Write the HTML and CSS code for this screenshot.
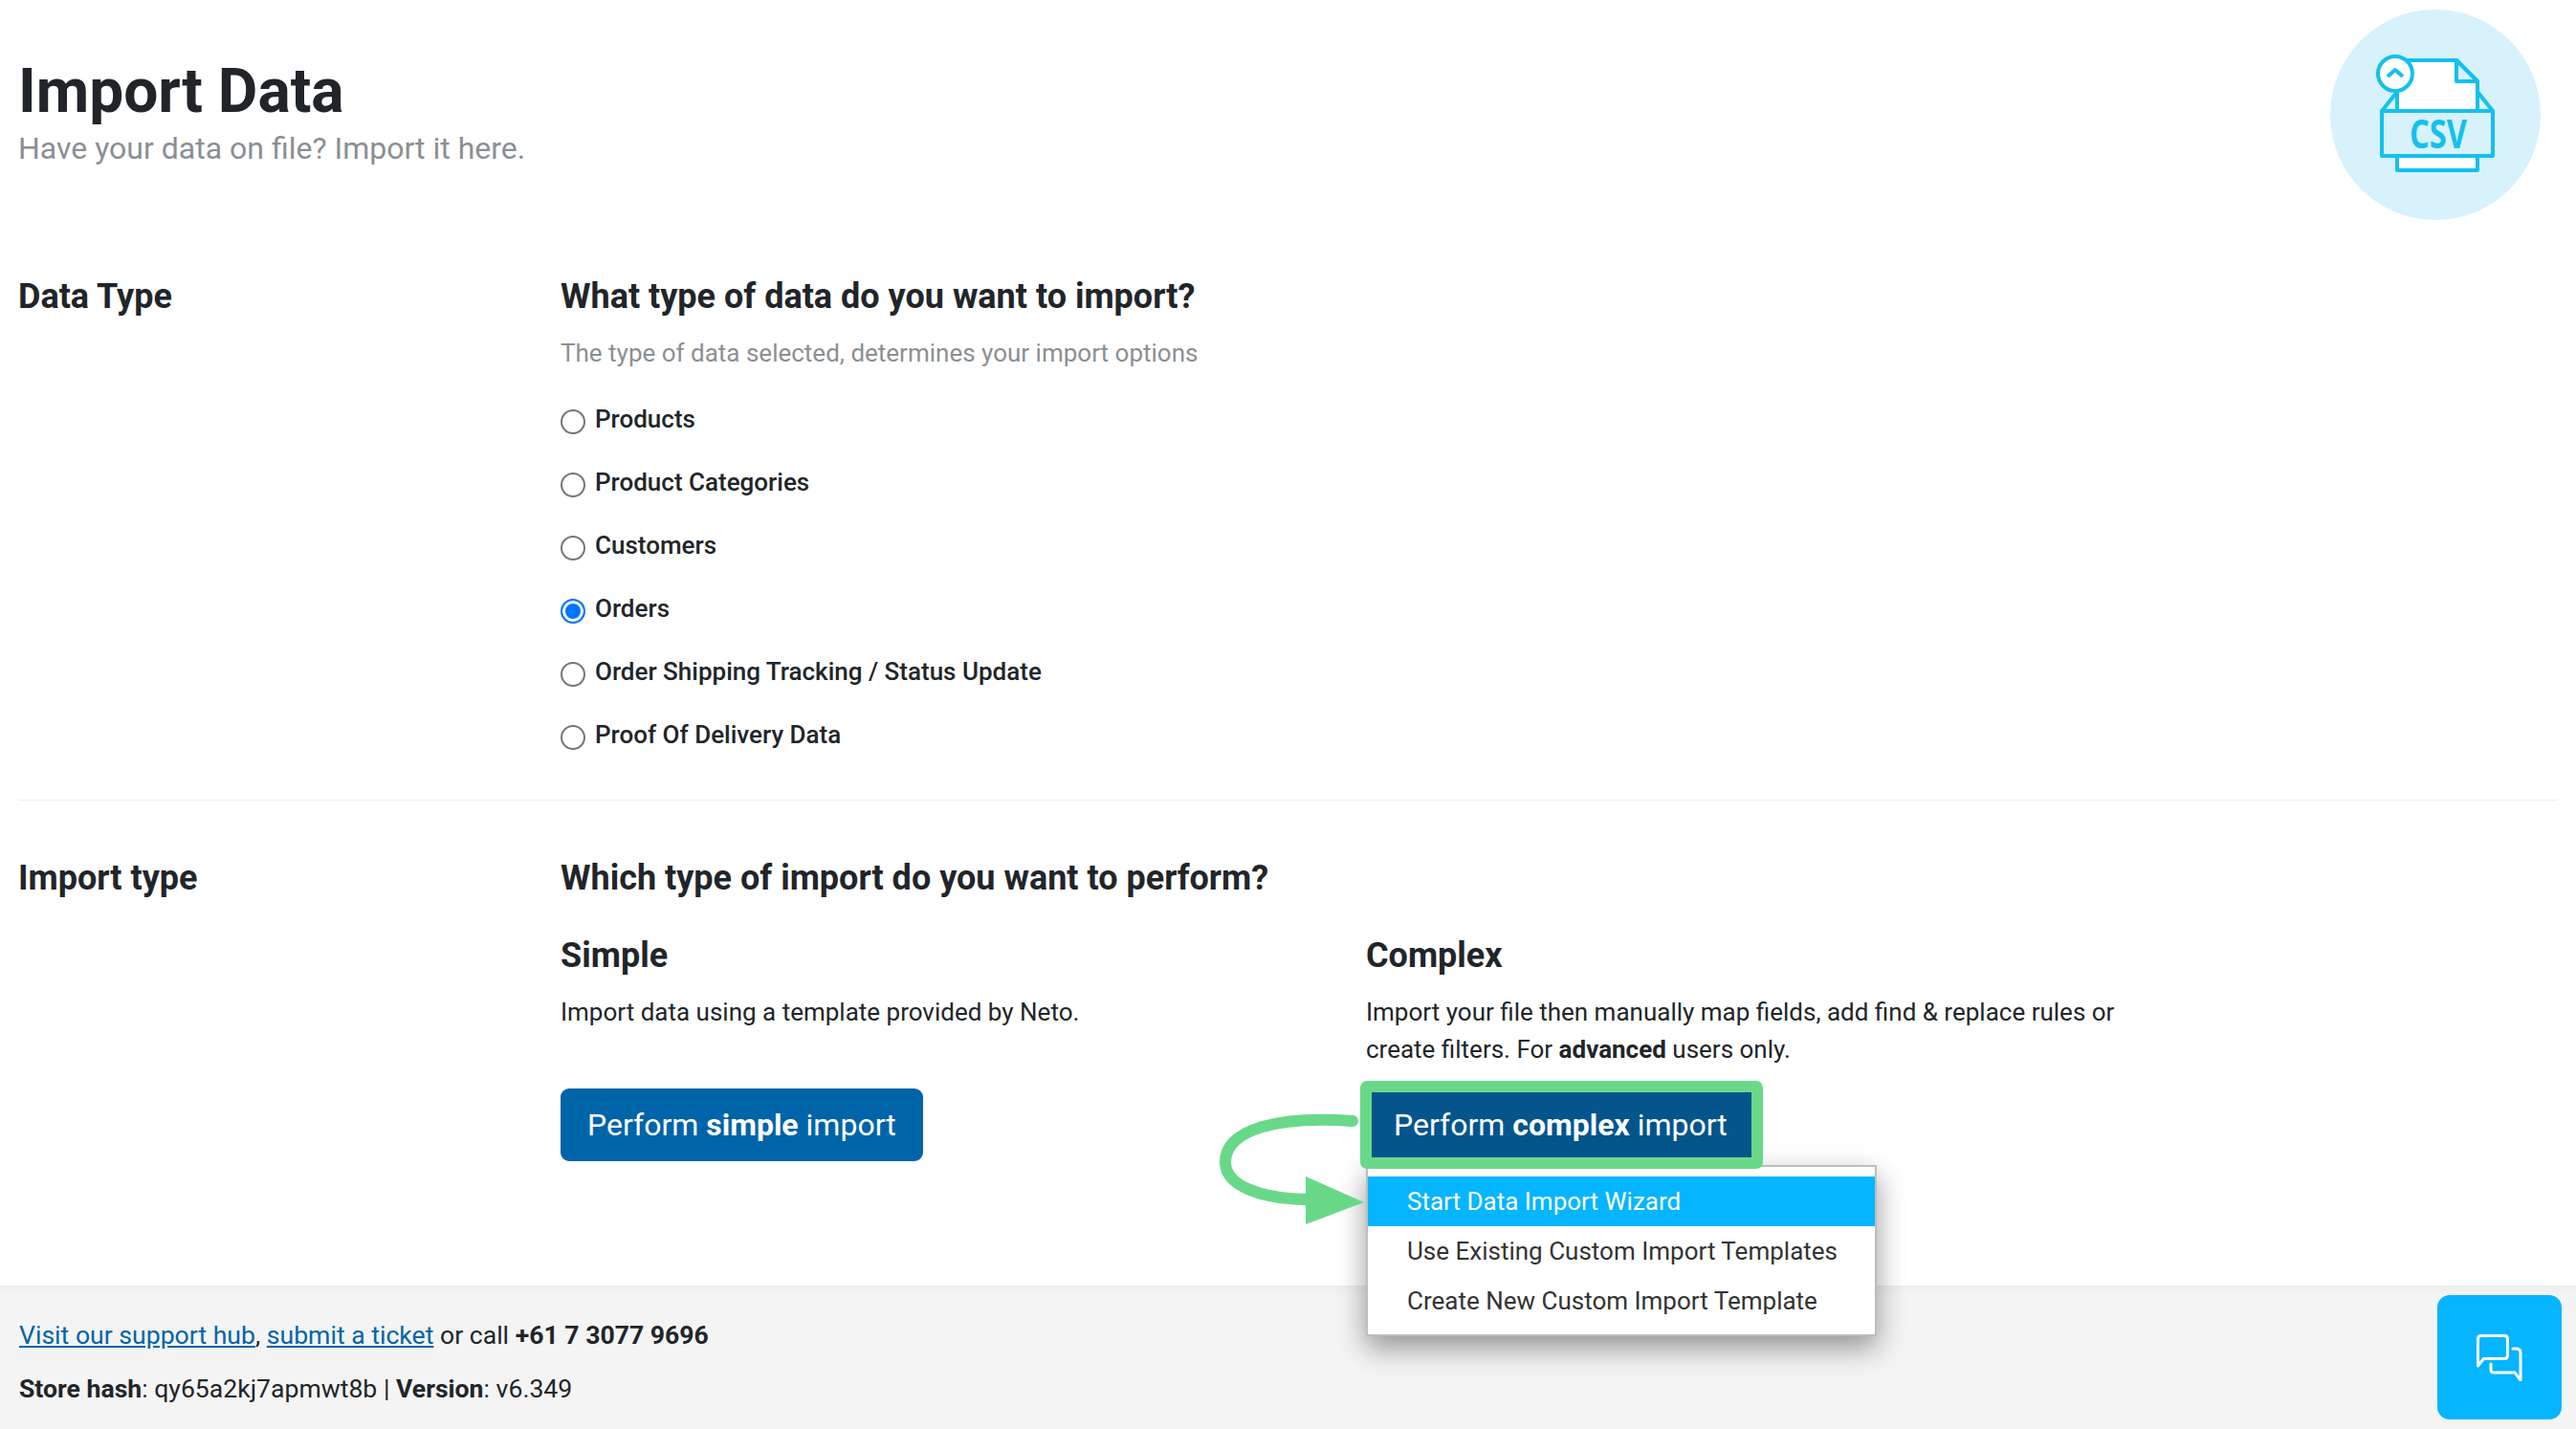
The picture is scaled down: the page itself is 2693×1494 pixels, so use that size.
FILE: index.html
```html
<!DOCTYPE html>
<html lang="en">
<head>
<meta charset="utf-8">
<title>Import Data</title>
<link rel="stylesheet" href="styles.css">
</head>
<body>
<main class="main">
  <header class="page-head">
    <div class="titles">
      <h1 class="title">Import Data</h1>
      <p class="subtitle">Have your data on file? Import it here.</p>
    </div>
    <svg class="csv-badge" width="220" height="220" viewBox="0 0 220 220">
      <circle cx="110" cy="110" r="110" fill="#d8f2fb"/>
      <g fill="#fff" stroke="#14c0ee" stroke-width="4" stroke-linejoin="round">
        <path d="M70 86 L54 106 H170 L154 86 Z" fill="#d8f2fb"/>
        <path d="M70 153 V168 H154 V153 Z"/>
        <path d="M70 106 V53 H132 L154 75 V106 Z"/>
        <path d="M132 53 V75 H154 Z" fill="#d8f2fb"/>
        <rect x="54" y="106" width="116" height="47" fill="#d8f2fb"/>
        <circle cx="68" cy="67" r="18"/>
        <path d="M60 70 L68 63 L76 70" fill="none"/>
      </g>
      <text class="csv-text" x="83" y="145" textLength="60" lengthAdjust="spacingAndGlyphs">CSV</text>
    </svg>
  </header>

  <section class="section">
    <h2 class="section-label">Data Type</h2>
    <div class="section-body">
      <h2 class="question">What type of data do you want to import?</h2>
      <p class="hint">The type of data selected, determines your import options</p>
      <div class="options">
        <label class="option"><input class="radio" type="radio" name="type">Products</label>
        <label class="option"><input class="radio" type="radio" name="type">Product Categories</label>
        <label class="option"><input class="radio" type="radio" name="type">Customers</label>
        <label class="option"><input class="radio" type="radio" name="type" checked>Orders</label>
        <label class="option"><input class="radio" type="radio" name="type">Order Shipping Tracking / Status Update</label>
        <label class="option"><input class="radio" type="radio" name="type">Proof Of Delivery Data</label>
      </div>
    </div>
  </section>

  <hr class="divider">

  <section class="section section-import">
    <h2 class="section-label">Import type</h2>
    <div class="section-body">
      <h2 class="question">Which type of import do you want to perform?</h2>
      <div class="import-cols">
        <div class="import-col">
          <h3 class="col-title">Simple</h3>
          <p class="col-text">Import data using a template provided by Neto.</p>
          <a class="btn btn-simple">Perform <b>simple</b> import</a>
        </div>
        <div class="import-col">
          <h3 class="col-title">Complex</h3>
          <p class="col-text">Import your file then manually map fields, add find &amp; replace rules or create filters. For <b>advanced</b> users only.</p>
          <div class="complex-wrap">
            <div class="highlight"><a class="btn btn-complex">Perform <b>complex</b> import</a></div>
            <svg class="arrow" width="146" height="116" viewBox="0 0 146 116">
              <path d="M133 9 C55 3 0 18 0 52 C0 78 40 90 84 91" fill="none" stroke="#69d989" stroke-width="12" stroke-linecap="round"/>
              <path d="M84 67 L145 94 L84 117 Z" fill="#69d989"/>
            </svg>
            <ul class="menu">
              <li class="menu-item menu-item-active">Start Data Import Wizard</li>
              <li class="menu-item">Use Existing Custom Import Templates</li>
              <li class="menu-item">Create New Custom Import Template</li>
            </ul>
          </div>
        </div>
      </div>
    </div>
  </section>
</main>

<footer class="footer">
  <p class="foot-line"><a class="foot-link">Visit our support hub</a>, <a class="foot-link">submit a ticket</a> or call <b>+61 7 3077 9696</b></p>
  <p class="foot-line foot-line-2"><b>Store hash</b>: qy65a2kj7apmwt8b | <b>Version</b>: v6.349</p>
  <button class="chat" type="button" aria-label="Chat">
    <svg width="48" height="49" viewBox="0 0 48 49" fill="none" stroke="#fff" stroke-width="3" stroke-linejoin="round" stroke-linecap="round">
      <path d="M1.5 33 V5 Q1.5 1.5 5 1.5 H29 Q32.5 1.5 32.5 5 V22 Q32.5 25.5 29 25.5 H7.5 Z"/>
      <path d="M38 15 H41 Q46 15 46 19 V48 L40 40 H18 Q15 40 15 37 V31"/>
    </svg>
  </button>
</footer>
</body>
</html>
```

FILE: styles.css
```css
* { box-sizing: border-box; }
html, body { margin: 0; height: 100%; }
body {
  min-height: 1494px;
  display: flex;
  flex-direction: column;
  overflow: hidden;
  background: #fff;
  color: #212529;
  font-family: Roboto, "Liberation Sans", sans-serif;
  font-size: 27px;
}
h1, h2, h3, p, ul { margin: 0; padding: 0; }
.main { flex: 1; padding: 0 20px 0 19px; }
.page-head { display: flex; justify-content: space-between; padding-top: 10px; }
.titles { padding-top: 47px; }
.title { font-size: 64px; line-height: 78px; font-weight: 700; }
.subtitle { font-size: 32px; line-height: 40px; color: #8b8f93; }
.csv-badge { margin-right: 17px; flex: none; }
.csv-text { font-family: "Open Sans", sans-serif; font-size: 41px; font-weight: 700; fill: #14c0ee; }
.section { display: grid; grid-template-columns: 567px 1fr; margin-top: 58px; }
.section-import { margin-top: 59px; }
.section-label, .question { font-size: 36px; line-height: 44px; font-weight: 700; }
.hint { margin-top: 17px; font-size: 26px; line-height: 40px; color: #8b8f93; }
.options { margin-top: 16px; }
.option { display: flex; align-items: flex-start; height: 66px; padding-top: 13px; line-height: 40px; font-size: 26px; font-weight: 500; }
.radio {
  appearance: none;
  width: 26px;
  height: 26px;
  margin: 10px 10px 0 0;
  flex: none;
  border: 2px solid #767676;
  border-radius: 50%;
  background: #fff;
}
.radio:checked { border-color: #0075ff; background: #0075ff; box-shadow: inset 0 0 0 3px #fff; }
.divider { margin: 35px 0 0; border: 0; border-top: 1px solid #eeeeee; }
.import-cols { display: grid; grid-template-columns: 842px 1fr; margin-top: 37px; }
.col-title { font-size: 36px; line-height: 44px; font-weight: 700; }
.col-text { margin-top: 18px; min-height: 78px; max-width: 800px; line-height: 39px; font-size: 26px; }
.btn { display: inline-flex; align-items: center; white-space: pre; color: #fff; font-size: 32px; }
.btn b { font-weight: 700; }
.btn-simple { margin-top: 21px; height: 76px; padding: 0 28px; background: #0064a8; border-radius: 9px; }
.complex-wrap { position: relative; margin-top: 13px; }
.highlight { position: relative; z-index: 2; display: inline-flex; margin-left: -6px; border: 12px solid #69d989; border-radius: 7px; }
.btn-complex { height: 68px; padding: 0 25px 0 23px; background: #03558c; }
.arrow { position: absolute; left: -147px; top: 33px; overflow: visible; z-index: 2; }
.menu {
  position: absolute;
  z-index: 1;
  left: 0;
  top: 88px;
  width: 534px;
  height: 179px;
  padding-top: 10px;
  list-style: none;
  background: #fff;
  border: 2px solid #bdbdbd;
  box-shadow: 0 12px 28px rgba(0, 0, 0, .4);
}
.menu-item { height: 52px; padding-left: 41px; line-height: 52px; font-size: 26px; color: #333; }
.menu-item-active { background: #05b5ff; color: #fff; }
.footer {
  position: relative;
  height: 150px;
  padding: 32px 0 0 20px;
  background: linear-gradient(#eeeeee, #f4f4f4 12px);
}
.foot-line { line-height: 40px; font-size: 26.6px; }
.foot-line-2 { margin-top: 16px; }
.foot-line b { font-weight: 700; }
.foot-link { color: #0064a8; text-decoration: underline; }
.chat {
  position: absolute;
  right: 15px;
  top: 10px;
  display: flex;
  align-items: center;
  justify-content: center;
  width: 130px;
  height: 130px;
  padding: 0;
  border: 0;
  border-radius: 13px;
  background: #05b5ff;
}
```
